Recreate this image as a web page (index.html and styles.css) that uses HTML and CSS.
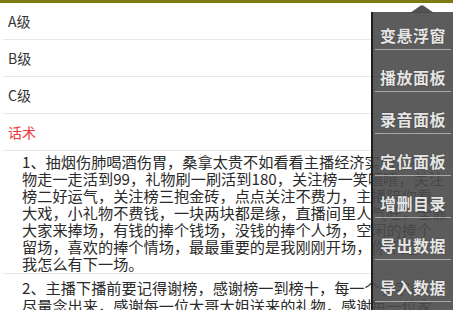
FILE: index.html
```html
<!DOCTYPE html>
<html lang="zh">
<head>
<meta charset="utf-8">
<link rel="stylesheet" href="styles.css">
</head>
<body>
<div class="page">
  <div class="topbar"></div>
  <div class="row">A级</div>
  <div class="row">B级</div>
  <div class="row">C级</div>
  <div class="row red">话术</div>
  <div class="para first">1、抽烟伤肺喝酒伤胃，桑拿太贵不如看看主播经济实力，礼<br>物走一走活到99，礼物刷一刷活到180，关注榜一笑嘻嘻，关注<br>榜二好运气，关注榜三抱金砖，点点关注不费力，主播陪你看<br>大戏，小礼物不费钱，一块两块都是缘，直播间里人气旺，全靠<br>大家来捧场，有钱的捧个钱场，没钱的捧个人场，空闲的捧个<br>留场，喜欢的捧个情场，最最重要的是我刚刚开场，你不走<br>我怎么有下一场。</div>
  <div class="para second">2、主播下播前要记得谢榜，感谢榜一到榜十，每一个名字都<br>尽量念出来，感谢每一位大哥大姐送来的礼物，感谢每一位家</div>
</div>
<div class="menu">
  <svg class="arrow" width="24" height="8" viewBox="0 0 24 8"><path d="M0 8 L10 1 Q12 -0.5 14 1 L24 8 Z" fill="#4a4a4a"/></svg>
  <div class="item firstitem">变悬浮窗</div>
  <div class="item">播放面板</div>
  <div class="item">录音面板</div>
  <div class="item">定位面板</div>
  <div class="item">增删目录</div>
  <div class="item">导出数据</div>
  <div class="item">导入数据</div>
</div>
</body>
</html>
```
FILE: styles.css
```css
html, body {
  margin: 0;
  padding: 0;
  background: #ffffff;
  overflow: hidden;
}
body {
  width: 462px;
  height: 310px;
  position: relative;
  font-family: "Noto Sans CJK SC", "Noto Sans", sans-serif;
}
.page {
  width: 453px;
}
.topbar {
  height: 3px;
  background: #7b7b14;
}
.row {
  height: 36px;
  line-height: 36px;
  margin-left: 3px;
  padding-left: 5px;
  border-bottom: 1px solid #e8e8e8;
  font-size: 14px;
  color: #333333;
}
.row.red {
  color: #f03a3a;
}
.para {
  margin-left: 3px;
  padding-left: 19px;
  font-size: 15.2px;
  line-height: 17px;
  color: #2a2a2a;
  white-space: nowrap;
  overflow: hidden;
}
.para.first {
  padding-top: 2px;
  padding-bottom: 1px;
  border-bottom: 1px solid #e8e8e8;
}
.para.second {
  padding-top: 4px;
  line-height: 18px;
}
.menu {
  position: absolute;
  left: 371px;
  top: 12px;
  width: 80px;
  height: 310px;
  background: rgba(74, 74, 74, 0.9);
  border-left: 2px solid #1e1e1e;
  display: flex;
  flex-direction: column;
}
.arrow {
  position: absolute;
  left: 37px;
  top: -7px;
  opacity: 0.95;
}
.item {
  margin: 0 2px;
  padding-top: 16px;
  padding-bottom: 3px;
  line-height: 22px;
  border-bottom: 1px solid #a8a8a8;
  text-align: center;
  font-size: 16px;
  font-weight: bold;
  letter-spacing: 0.5px;
  color: #e6e6e6;
  text-shadow: 0 0 1px #222;
}
.item.firstitem {
  padding-top: 12px;
}
```
